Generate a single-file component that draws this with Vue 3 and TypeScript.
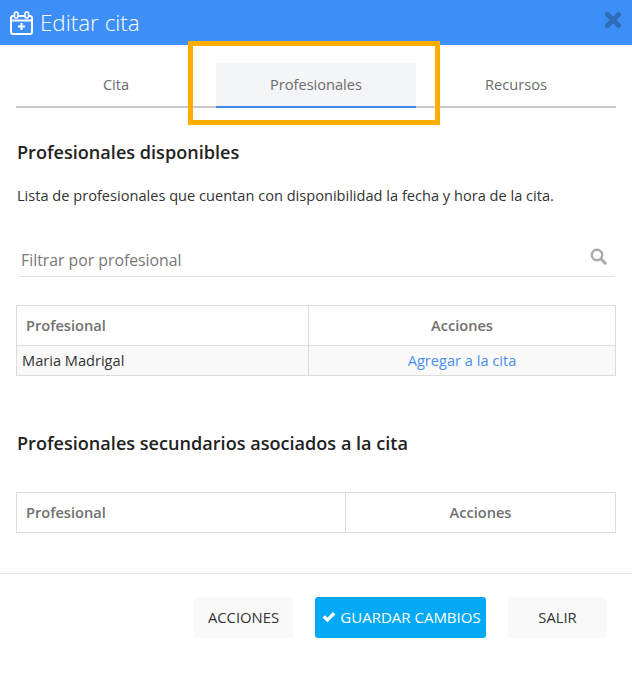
<script setup lang="ts">
const tabs = ['Cita', 'Profesionales', 'Recursos']
const activeTab = 'Profesionales'
</script>

<template>
  <div class="modal">
    <header class="modal__header">
      <svg class="modal__icon" width="24" height="24" viewBox="0 0 24 24" fill="none">
        <rect x="1" y="5" width="21" height="18" rx="2" stroke="#fff" stroke-width="2" />
        <path d="M1 9.5h21" stroke="#fff" stroke-width="2" />
        <rect x="4.5" y="1" width="3.5" height="6" rx="1.5" fill="#3d8ff7" stroke="#fff" stroke-width="1.6" />
        <rect x="15" y="1" width="3.5" height="6" rx="1.5" fill="#3d8ff7" stroke="#fff" stroke-width="1.6" />
        <path d="M11.5 12v7M8 15.5h7" stroke="#fff" stroke-width="2" />
      </svg>
      <h1 class="modal__title">Editar cita</h1>
      <svg class="modal__close" width="18" height="18" viewBox="0 0 18 18">
        <path d="M3.5 3.5l11 11M14.5 3.5l-11 11" stroke="#2f6db8" stroke-width="5" stroke-linecap="round" />
      </svg>
    </header>

    <nav class="tabs">
      <div
        v-for="tab in tabs"
        :key="tab"
        :class="['tabs__item', { 'tabs__item--active': tab === activeTab }]"
      >
        {{ tab }}
      </div>
    </nav>
    <div class="highlight"></div>

    <section class="content">
      <h2 class="heading">Profesionales disponibles</h2>
      <p class="intro">Lista de profesionales que cuentan con disponibilidad la fecha y hora de la cita.</p>

      <div class="filter">
        <input class="filter__input" type="text" placeholder="Filtrar por profesional" />
        <svg class="filter__icon" width="17" height="17" viewBox="0 0 17 17" fill="none">
          <circle cx="7" cy="7" r="5.2" stroke="#a9a9a9" stroke-width="2.4" />
          <path d="M10.8 10.8l4.4 4.4" stroke="#a9a9a9" stroke-width="3" stroke-linecap="round" />
        </svg>
      </div>

      <div class="table table--first">
        <div class="table__row table__row--head">
          <div class="table__cell table__cell--name">Profesional</div>
          <div class="table__cell table__cell--actions">Acciones</div>
        </div>
        <div class="table__row table__row--body">
          <div class="table__cell table__cell--name">Maria Madrigal</div>
          <div class="table__cell table__cell--actions"><a class="link">Agregar a la cita</a></div>
        </div>
      </div>

      <h2 class="heading heading--second">Profesionales secundarios asociados a la cita</h2>

      <div class="table table--second">
        <div class="table__row table__row--head">
          <div class="table__cell table__cell--name">Profesional</div>
          <div class="table__cell table__cell--actions">Acciones</div>
        </div>
      </div>
    </section>

    <footer class="footer">
      <button class="btn">ACCIONES</button>
      <button class="btn btn--primary">
        <svg width="14" height="12" viewBox="0 0 14 12">
          <path d="M0.6 6.5L2.9 4.2L5.4 6.7L11 1.1L13.4 3.4L5.4 11.2Z" fill="#fff" />
        </svg>
        GUARDAR CAMBIOS
      </button>
      <button class="btn">SALIR</button>
    </footer>
  </div>
</template>

<style>
html,
body {
  background: #fff;
}
</style>

<style scoped>
.modal {
  position: relative;
  width: 632px;
  height: 683px;
  overflow: hidden;
  background: #fff;
  font-family: "Open Sans", "Liberation Sans", sans-serif;
  color: #333;
}

.modal__header {
  display: flex;
  align-items: center;
  height: 45px;
  padding: 0 18px 0 10px;
  box-sizing: border-box;
  background: #3d8ff7;
  color: #fff;
}

.modal__title {
  margin: 0 0 0 6px;
  font-size: 22.4px;
  font-weight: 300;
  line-height: 45px;
}

.modal__icon {
  flex: none;
}

.modal__close {
  margin-left: auto;
  margin-right: -8px;
  margin-top: -6px;
}

.tabs {
  display: flex;
  margin: 18px 16px 0;
  border-bottom: 2px solid #c8c8c8;
}

.tabs__item {
  flex: 1;
  height: 43px;
  margin-bottom: -2px;
  font-size: 14.6px;
  line-height: 43px;
  text-align: center;
  color: #6b6b6b;
}

.tabs__item--active {
  height: 43px;
  border-bottom: 2px solid #3f86ee;
  background: #f4f5f7;
}

.highlight {
  position: absolute;
  left: 188px;
  top: 41px;
  width: 252px;
  height: 84px;
  box-sizing: border-box;
  border: 5px solid #ffae00;
}

.content {
  padding: 0 16px;
}

.heading {
  margin: 32px 0 0 1px;
  font-size: 18.1px;
  font-weight: 600;
  line-height: 24px;
  color: #222;
}

.heading--second {
  margin-top: 55px;
}

.intro {
  margin: 21px 0 0 1px;
  font-size: 14.6px;
  line-height: 20px;
  color: #333;
}

.filter {
  position: relative;
  margin: 40px 2px 0 3px;
  border-bottom: 1px solid #e2e2e2;
}

.filter__input {
  display: block;
  width: 100%;
  height: 31px;
  padding: 0 2px 2px;
  box-sizing: border-box;
  border: 0;
  outline: 0;
  background: transparent;
  font-family: inherit;
  font-size: 15.8px;
}

.filter__input::placeholder {
  color: #777;
  opacity: 1;
}

.filter__icon {
  position: absolute;
  right: 7px;
  top: 3px;
}

.table {
  border: 1px solid #dcdcdc;
  border-bottom: 0;
  font-size: 14.6px;
}

.table--first {
  margin-top: 28px;
}

.table--second {
  margin-top: 37px;
}

.table__row {
  display: flex;
  border-bottom: 1px solid #dcdcdc;
}

.table__row--head {
  height: 39px;
  line-height: 39px;
  font-weight: 600;
  color: #707070;
}

.table__row--body {
  height: 29px;
  line-height: 29px;
  background: #f9f9f9;
}

.table__cell--name {
  flex: none;
  width: 292px;
  padding-left: 5px;
  box-sizing: border-box;
  border-right: 1px solid #dcdcdc;
}

.table__row--head .table__cell--name {
  padding-left: 9px;
}

.table--second .table__cell--name {
  width: 329px;
}

.table__cell--actions {
  flex: 1;
  text-align: center;
}

.link {
  color: #4d8ff0;
}

.footer {
  display: flex;
  justify-content: flex-end;
  gap: 22px;
  margin-top: 40px;
  padding: 23px 25px 0 0;
  border-top: 1px solid #e8e8e8;
}

.btn {
  width: 99px;
  height: 41px;
  padding: 0 0 2px;
  border: 0;
  border-radius: 3px;
  background: #f9f9f9;
  font-family: inherit;
  font-size: 14.8px;
  color: #333;
}

.btn--primary {
  display: flex;
  align-items: center;
  justify-content: center;
  gap: 4px;
  width: 171px;
  padding-left: 2px;
  background: #03a9f4;
  color: #fff;
  font-size: 15px;
}
</style>
